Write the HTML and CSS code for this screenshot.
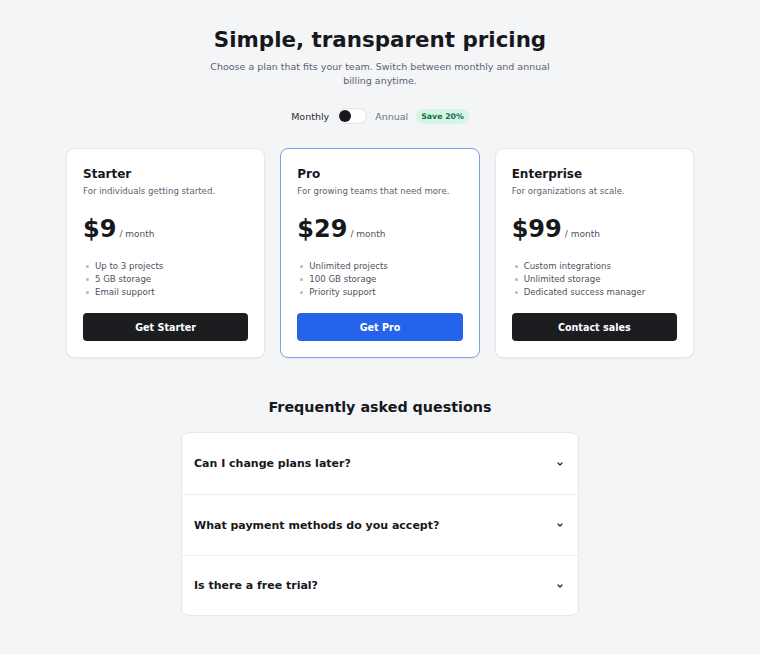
FILE: index.html
```html
<!DOCTYPE html>
<html lang="en">
<head>
<meta charset="utf-8">
<title>Pricing</title>
<link rel="stylesheet" href="styles.css">
</head>
<body>
<main class="page">
  <header class="hero">
    <h1 class="title">Simple, transparent pricing</h1>
    <p class="subtitle">Choose a plan that fits your team. Switch between monthly and annual billing anytime.</p>
    <div class="billing">
      <span class="billing-label">Monthly</span>
      <span class="switch"><span class="knob"></span></span>
      <span class="billing-label muted">Annual</span>
      <span class="badge">Save 20%</span>
    </div>
  </header>

  <section class="plans">
    <article class="card">
      <h2 class="plan-name">Starter</h2>
      <p class="plan-desc">For individuals getting started.</p>
      <div class="price"><span class="amount">$9</span><span class="per">/ month</span></div>
      <ul class="features">
        <li>Up to 3 projects</li>
        <li>5 GB storage</li>
        <li>Email support</li>
      </ul>
      <button class="btn btn-dark">Get Starter</button>
    </article>
    <article class="card card-featured">
      <h2 class="plan-name">Pro</h2>
      <p class="plan-desc">For growing teams that need more.</p>
      <div class="price"><span class="amount">$29</span><span class="per">/ month</span></div>
      <ul class="features">
        <li>Unlimited projects</li>
        <li>100 GB storage</li>
        <li>Priority support</li>
      </ul>
      <button class="btn btn-blue">Get Pro</button>
    </article>
    <article class="card">
      <h2 class="plan-name">Enterprise</h2>
      <p class="plan-desc">For organizations at scale.</p>
      <div class="price"><span class="amount">$99</span><span class="per">/ month</span></div>
      <ul class="features">
        <li>Custom integrations</li>
        <li>Unlimited storage</li>
        <li>Dedicated success manager</li>
      </ul>
      <button class="btn btn-dark">Contact sales</button>
    </article>
  </section>

  <section class="faq">
    <h2 class="faq-title">Frequently asked questions</h2>
    <div class="faq-list">
      <div class="faq-item"><span>Can I change plans later?</span><svg class="chev" viewBox="0 0 10 10" width="10" height="10"><path d="M3 4 L5 6 L7 4" fill="none" stroke="#1f2328" stroke-width="1.2" stroke-linecap="round" stroke-linejoin="round"/></svg></div>
      <div class="faq-item"><span>What payment methods do you accept?</span><svg class="chev" viewBox="0 0 10 10" width="10" height="10"><path d="M3 4 L5 6 L7 4" fill="none" stroke="#1f2328" stroke-width="1.2" stroke-linecap="round" stroke-linejoin="round"/></svg></div>
      <div class="faq-item"><span>Is there a free trial?</span><svg class="chev" viewBox="0 0 10 10" width="10" height="10"><path d="M3 4 L5 6 L7 4" fill="none" stroke="#1f2328" stroke-width="1.2" stroke-linecap="round" stroke-linejoin="round"/></svg></div>
    </div>
  </section>
</main>
</body>
</html>
```
FILE: styles.css
```css
* { box-sizing: border-box; }
html, body { margin: 0; padding: 0; }
body {
  background: #f4f5f7;
  font-family: "DejaVu Sans", Verdana, sans-serif;
  color: #16181c;
}
.page {
  width: 628px;
  margin: 0 auto;
  padding-top: 24px;
}
.hero { text-align: center; }
.title {
  margin: 0;
  font-size: 21.4px;
  line-height: 32px;
  font-weight: 700;
}
.subtitle {
  width: 350px;
  margin: 4px auto 0;
  font-size: 9.5px;
  line-height: 14px;
  color: #5b6270;
}
.billing {
  display: flex;
  justify-content: center;
  align-items: center;
  gap: 8px;
  margin-top: 19px;
  height: 18px;
}
.billing-label { font-size: 9.5px; font-weight: 400; color: #2a2e35; }
.billing-label.muted { color: #6b7280; }
.switch {
  width: 30px;
  height: 16px;
  border-radius: 8px;
  background: #ffffff;
  border: 1px solid #e3e5e9;
  display: flex;
  align-items: center;
  padding: 1px;
}
.knob {
  width: 12px;
  height: 12px;
  border-radius: 50%;
  background: #16181c;
}
.badge {
  font-size: 7.8px;
  font-weight: 700;
  color: #0f6b45;
  background: #d7f5e6;
  border-radius: 8px;
  padding: 3px 5px;
  line-height: 9px;
}
.plans {
  display: grid;
  grid-template-columns: repeat(3, 1fr);
  gap: 15px;
  margin-top: 23px;
}
.card {
  background: #fff;
  border: 1px solid #e6e8ec;
  border-radius: 8px;
  padding: 17px 16px 16px;
  box-shadow: 0 1px 2px rgba(16, 24, 40, 0.05);
}
.card-featured { border-color: #7f9fe3; }
.plan-name {
  margin: 0;
  font-size: 12px;
  line-height: 16px;
  font-weight: 700;
}
.plan-desc {
  margin: 2px 0 0;
  font-size: 8.6px;
  line-height: 14px;
  color: #5b6270;
}
.price {
  display: flex;
  align-items: baseline;
  gap: 3px;
  margin-top: 15px;
}
.amount {
  font-size: 24px;
  line-height: 32px;
  font-weight: 700;
}
.per { font-size: 9px; color: #4b5260; }
.features {
  list-style: none;
  margin: 15px 0 0;
  padding: 0;
  font-size: 8.6px;
  line-height: 13px;
  color: #4b5260;
}
.features li {
  display: flex;
  align-items: center;
  gap: 6px;
}
.features li::before {
  content: "";
  width: 3px;
  height: 3px;
  margin-left: 3px;
  border-radius: 50%;
  background: #b4b8c0;
  flex: none;
}
.btn {
  display: block;
  width: 100%;
  height: 28px;
  margin-top: 14px;
  border: 0;
  border-radius: 4px;
  font-family: inherit;
  font-size: 9.6px;
  font-weight: 700;
  color: #fff;
}
.btn-dark { background: #1b1d21; }
.btn-blue { background: #2563eb; }
.faq {
  width: 398px;
  margin: 40px auto 0;
}
.faq-title {
  margin: 0;
  text-align: center;
  font-size: 14.3px;
  line-height: 18px;
  font-weight: 700;
}
.faq-list {
  margin-top: 16px;
  background: #fff;
  border: 1px solid #e6e8ec;
  border-radius: 8px;
}
.faq-item {
  display: flex;
  justify-content: space-between;
  align-items: center;
  height: 61px;
  padding: 0 12px;
  font-size: 11px;
  font-weight: 700;
  color: #16181c;
}
.faq-item:last-child { height: 60px; }
.faq-item + .faq-item { border-top: 1px solid #eceef1; }
.chev { margin-right: 1px; }
```
